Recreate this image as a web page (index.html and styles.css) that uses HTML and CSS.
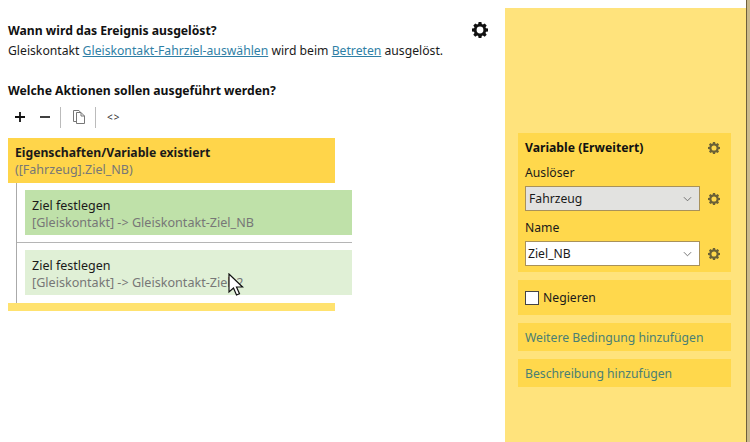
FILE: index.html
```html
<!DOCTYPE html>
<html lang="de">
<head>
    <meta charset="UTF-8">
    <meta name="viewport" content="width=device-width, initial-scale=1.0">
    <title>Ereignis</title>
    <link rel="stylesheet" href="styles.css">
</head>
<body>
    <svg class="svg-defs" width="0" height="0">
        <defs>
            <path id="gear" fill-rule="evenodd" d="M6.600 0h2.800l.4 2.100 1.100.5 1.800-1.200 2 2-1.200 1.800.5 1.100 2 .3v2.800l-2 .4-.5 1.100 1.200 1.800-2 2-1.800-1.200-1.100.5-.4 2H6.600l-.4-2-1.100-.5-1.800 1.200-2-2 1.200-1.800-.5-1.100-2-.4V6.600l2-.3.5-1.100-1.200-1.800 2-2 1.800 1.200 1.100-.5zM8 4.600a3.400 3.400 0 1 0 0 6.800 3.400 3.400 0 0 0 0-6.800z"/>
        </defs>
    </svg>

    <div class="app">
        <main class="editor">
            <section class="trigger">
                <div class="trigger-text">
                    <h2>Wann wird das Ereignis ausgelöst?</h2>
                    <p>Gleiskontakt <a href="#">Gleiskontakt-Fahrziel-auswählen</a> wird beim <a href="#">Betreten</a> ausgelöst.</p>
                </div>
                <svg class="gear-large" viewBox="0 0 16 16"><use href="#gear"/></svg>
            </section>

            <h2 class="actions-title">Welche Aktionen sollen ausgeführt werden?</h2>

            <div class="toolbar">
                <svg class="tool" viewBox="0 0 12 12"><path d="M5.100 1h1.800v4.100H11v1.800H6.900V11H5.100V6.900H1V5.100h4.100z"/></svg>
                <svg class="tool" viewBox="0 0 12 12"><path d="M1 5.200h10v1.600H1z"/></svg>
                <span class="tool-sep"></span>
                <svg class="tool tool-copy" viewBox="0 0 14 16"><path d="M4.500 12.500h-3v-11h5.500l1.500 2M4.500 3.500h4.500l3.500 3.500v7.500h-8zM9 3.500v3.500h3.500"/></svg>
                <span class="tool-sep"></span>
                <span class="tool-code">&lt;&gt;</span>
            </div>

            <div class="tree">
                <div class="block-head">
                    <strong>Eigenschaften/Variable existiert</strong>
                    <span class="muted">([Fahrzeug].Ziel_NB)</span>
                </div>
                <div class="block-body">
                    <div class="action action-selected">
                        <span>Ziel festlegen</span>
                        <span class="muted">[Gleiskontakt] -&gt; Gleiskontakt-Ziel_NB</span>
                    </div>
                    <div class="action-sep"></div>
                    <div class="action action-hover">
                        <span>Ziel festlegen</span>
                        <span class="muted">[Gleiskontakt] -&gt; Gleiskontakt-Ziel_2</span>
                        <svg class="cursor" viewBox="0 0 16 24"><path d="M1 1v18l4.500-4 3 7 3-1.300-3-6.700h6z"/></svg>
                    </div>
                </div>
                <div class="block-foot"></div>
            </div>
        </main>

        <aside class="panel">
            <div class="card card-main">
                <div class="card-row">
                    <strong>Variable (Erweitert)</strong>
                    <svg class="gear-small" viewBox="0 0 16 16"><use href="#gear"/></svg>
                </div>
                <label class="field-label">Auslöser</label>
                <div class="card-row">
                    <div class="select select-grey"><span>Fahrzeug</span><svg class="chevron" viewBox="0 0 10 6"><path d="M1 1l4 4 4-4"/></svg></div>
                    <svg class="gear-small" viewBox="0 0 16 16"><use href="#gear"/></svg>
                </div>
                <label class="field-label field-label-name">Name</label>
                <div class="card-row">
                    <div class="select"><span>Ziel_NB</span><svg class="chevron" viewBox="0 0 10 6"><path d="M1 1l4 4 4-4"/></svg></div>
                    <svg class="gear-small" viewBox="0 0 16 16"><use href="#gear"/></svg>
                </div>
            </div>
            <div class="card card-check">
                <span class="checkbox"></span>
                <span>Negieren</span>
            </div>
            <a class="card card-link" href="#">Weitere Bedingung hinzufügen</a>
            <a class="card card-link" href="#">Beschreibung hinzufügen</a>
        </aside>
        <div class="edge"></div>
    </div>
</body>
</html>
```

FILE: styles.css
```css
* {
    box-sizing: border-box;
}
html, body {
    height: 100%;
}
body {
    margin: 0;
    font-family: 'Noto Sans', 'Open Sans', sans-serif;
    font-size: 12.2px;
    line-height: 17px;
    color: #1a1a1a;
    background-color: #fff;
    overflow: hidden;
}
.svg-defs {
    position: absolute;
}
.app {
    display: flex;
    height: 442px;
}
.editor {
    width: 505px;
    padding: 22px 0 0 8px;
}
h2 {
    margin: 0;
    font-size: 12.2px;
    line-height: 17px;
    font-weight: 700;
    color: #111;
}
p {
    margin: 3px 0 0;
}
a {
    color: #2f7fa6;
}
.trigger {
    display: flex;
    justify-content: space-between;
    align-items: flex-start;
    width: 480px;
}
.gear-large {
    width: 16px;
    height: 16px;
    fill: #111;
}
.actions-title {
    margin-top: 23px;
}
.toolbar {
    display: flex;
    align-items: center;
    height: 24px;
    margin-top: 6px;
}
.tool {
    width: 12px;
    height: 12px;
    margin: 0 0 0 6px;
    fill: #111;
}
.tool + .tool {
    margin-left: 13px;
}
.tool-sep {
    width: 1px;
    height: 21px;
    margin-left: 9px;
    background-color: #bbb;
}
.tool-copy {
    width: 14px;
    height: 16px;
    margin-left: 11px;
    fill: none;
    stroke: #777;
    stroke-width: 1;
}
.tool-code {
    margin-left: 11px;
    font-size: 10px;
    letter-spacing: 1px;
    color: #333;
}
.tree {
    margin-top: 9px;
}
.block-head {
    display: flex;
    flex-direction: column;
    justify-content: center;
    width: 327px;
    height: 45px;
    padding: 0 7px;
    background-color: #ffd54a;
}
.muted {
    color: #777;
    font-size: 12.5px;
}
.block-body {
    display: flex;
    flex-direction: column;
    width: 336px;
    margin-left: 8px;
    padding-top: 7px;
    padding-bottom: 8px;
    border-left: 1px solid #aaa;
}
.action {
    position: relative;
    display: flex;
    flex-direction: column;
    justify-content: center;
    height: 45px;
    margin-left: 8px;
    padding: 2px 7px 0;
    font-size: 12.5px;
}
.action .muted {
    font-size: 12.6px;
}
.action-selected {
    background-color: #bfe1a9;
}
.action-hover {
    background-color: #e0f0d6;
}
.action-sep {
    height: 1px;
    margin: 7px 0;
    background-color: #b5b5b5;
}
.cursor {
    position: absolute;
    left: 203px;
    top: 23px;
    width: 16px;
    height: 24px;
    fill: #fff;
    stroke: #111;
    stroke-width: 1.2;
}
.block-foot {
    width: 327px;
    height: 8px;
    background-color: #ffe26f;
}
.panel {
    display: flex;
    flex-direction: column;
    gap: 8px;
    width: 241px;
    margin-top: 8px;
    padding: 125px 15px 0 13px;
    background-color: #ffe37c;
}
.edge {
    flex: 1;
    background-color: #c9b98c;
    border-left: 1px solid #6e5f3c;
}
.card {
    background-color: #ffd84c;
    padding: 0 7px;
}
.card-main {
    height: 139px;
    padding-top: 6px;
}
.card-row {
    display: flex;
    align-items: center;
    justify-content: space-between;
    padding-right: 4px;
}
.card-row strong {
    color: #111;
}
.gear-small {
    width: 12px;
    height: 12px;
    fill: #6b6136;
}
.field-label {
    display: block;
    margin-top: 8px;
    margin-bottom: 5px;
}
.field-label-name {
    margin-top: 8px;
}
.select {
    display: flex;
    align-items: center;
    justify-content: space-between;
    width: 175px;
    height: 25px;
    padding: 0 7px 0 2px;
    background-color: #fff;
    border: 1px solid #a8915a;
}
.select-grey {
    padding-left: 3px;
    background-color: #e2e2e0;
}
.chevron {
    width: 9px;
    height: 6px;
    fill: none;
    stroke: #666;
    stroke-width: 1;
}
.card-check {
    display: flex;
    align-items: center;
    gap: 4px;
    height: 35px;
}
.checkbox {
    width: 14px;
    height: 14px;
    background-color: #fff;
    border: 1px solid #444;
}
.card-link {
    display: flex;
    align-items: center;
    height: 28px;
    color: #4a7f74;
    text-decoration: none;
}
```
